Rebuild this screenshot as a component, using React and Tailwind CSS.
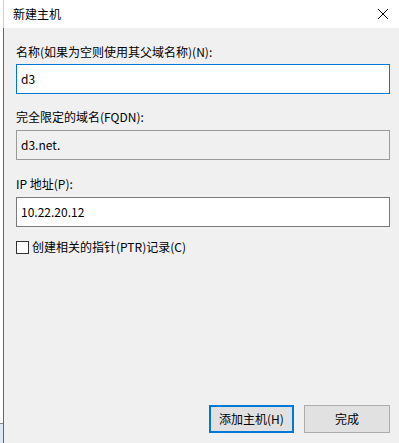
const font = { fontFamily: '"Noto Sans CJK SC", "Noto Sans", sans-serif' }

const Field = ({ value, focused, readOnly }) => (
  <div
    className={`h-[30px] flex items-center px-[4px] text-[12px] text-[#000] ${
      focused
        ? 'border border-[#0078d7] bg-white'
        : readOnly
        ? 'border border-[#9a9a9a] bg-[#f0f0f0]'
        : 'border border-[#7a7a7a] bg-white'
    }`}
  >
    {value}
  </div>
)

export default function App() {
  return (
    <div className="w-[399px] h-[443px] flex bg-white overflow-hidden" style={font}>
      <div className="w-[3px] flex flex-col">
        <div className="flex-1 bg-white" />
        <div className="h-[1px] bg-[#8a8a8a]" />
        <div className="h-[19px] bg-[#dde8f3]" />
      </div>
      <div className="flex-1 flex flex-col">
        <div className="h-[28px] bg-white flex items-center justify-between pl-[9px] pr-[8px] border-l border-[#d0d0d0]">
          <span className="text-[12px] text-[#000]">新建主机</span>
          <svg width="12" height="12" viewBox="0 0 12 12" className="mr-[2px]">
            <path d="M1 1 L11 11 M11 1 L1 11" stroke="#000" strokeWidth="1" />
          </svg>
        </div>
        <div className="flex-1 bg-[#f0f0f0] border-l border-[#1a7ad0] flex flex-col pl-[12px] pr-[9px]">
          <div className="mt-[16px] text-[12px] text-[#000] leading-[16px]">名称(如果为空则使用其父域名称)(N):</div>
          <div className="mt-[4px]">
            <Field value="d3" focused />
          </div>
          <div className="mt-[15px] text-[12px] text-[#000] leading-[16px]">完全限定的域名(FQDN):</div>
          <div className="mt-[5px]">
            <Field value="d3.net." readOnly />
          </div>
          <div className="mt-[16px] text-[12px] text-[#000] leading-[16px]">IP 地址(P):</div>
          <div className="mt-[5px]">
            <Field value="10.22.20.12" />
          </div>
          <div className="mt-[12px] flex items-center gap-[3px]">
            <div className="w-[13px] h-[13px] border border-[#333] bg-white" />
            <span className="text-[12px] text-[#000] leading-[16px]">创建相关的指针(PTR)记录(C)</span>
          </div>
          <div className="flex-1" />
          <div className="flex justify-end gap-[10px] mb-[10px]">
            <button className="w-[85px] h-[28px] border-2 border-[#0078d7] bg-[#e1e1e1] text-[12px] text-[#000]">
              添加主机(H)
            </button>
            <button className="w-[86px] h-[28px] border border-[#adadad] bg-[#e1e1e1] text-[12px] text-[#000]">
              完成
            </button>
          </div>
        </div>
      </div>
    </div>
  )
}
